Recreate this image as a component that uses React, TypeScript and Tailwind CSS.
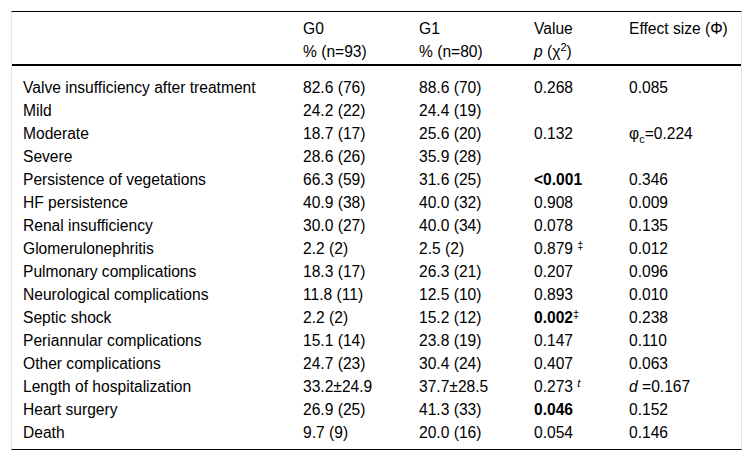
const rows: { label: string; g0: string; g1: string; p: React.ReactNode; eff: React.ReactNode }[] = [
  { label: 'Valve insufficiency after treatment', g0: '82.6 (76)', g1: '88.6 (70)', p: '0.268', eff: '0.085' },
  { label: 'Mild', g0: '24.2 (22)', g1: '24.4 (19)', p: '', eff: '' },
  {
    label: 'Moderate',
    g0: '18.7 (17)',
    g1: '25.6 (20)',
    p: '0.132',
    eff: (
      <>
        φ<sub className="text-[11px] -bottom-[4px]">c</sub>=0.224
      </>
    ),
  },
  { label: 'Severe', g0: '28.6 (26)', g1: '35.9 (28)', p: '', eff: '' },
  { label: 'Persistence of vegetations', g0: '66.3 (59)', g1: '31.6 (25)', p: <b>&lt;0.001</b>, eff: '0.346' },
  { label: 'HF persistence', g0: '40.9 (38)', g1: '40.0 (32)', p: '0.908', eff: '0.009' },
  { label: 'Renal insufficiency', g0: '30.0 (27)', g1: '40.0 (34)', p: '0.078', eff: '0.135' },
  {
    label: 'Glomerulonephritis',
    g0: '2.2 (2)',
    g1: '2.5 (2)',
    p: (
      <>
        0.879 <sup className="text-[11px]">‡</sup>
      </>
    ),
    eff: '0.012',
  },
  { label: 'Pulmonary complications', g0: '18.3 (17)', g1: '26.3 (21)', p: '0.207', eff: '0.096' },
  { label: 'Neurological complications', g0: '11.8 (11)', g1: '12.5 (10)', p: '0.893', eff: '0.010' },
  {
    label: 'Septic shock',
    g0: '2.2 (2)',
    g1: '15.2 (12)',
    p: (
      <>
        <b>0.002</b>
        <sup className="text-[11px]">‡</sup>
      </>
    ),
    eff: '0.238',
  },
  { label: 'Periannular complications', g0: '15.1 (14)', g1: '23.8 (19)', p: '0.147', eff: '0.110' },
  { label: 'Other complications', g0: '24.7 (23)', g1: '30.4 (24)', p: '0.407', eff: '0.063' },
  {
    label: 'Length of hospitalization',
    g0: '33.2±24.9',
    g1: '37.7±28.5',
    p: (
      <>
        0.273 <sup className="text-[11px] italic">t</sup>
      </>
    ),
    eff: (
      <>
        <i>d</i> =0.167
      </>
    ),
  },
  { label: 'Heart surgery', g0: '26.9 (25)', g1: '41.3 (33)', p: <b>0.046</b>, eff: '0.152' },
  { label: 'Death', g0: '9.7 (9)', g1: '20.0 (16)', p: '0.054', eff: '0.146' },
]

const cols = 'grid grid-cols-[280px_116px_115px_95px_125px]'

export default function App() {
  return (
    <div className="min-h-screen bg-white p-[11px] font-['Liberation_Sans',Arial,sans-serif] text-[15.6px] text-black">
      <div className="w-[731px] border-x border-x-[#e6e6e6] border-t border-t-black border-b border-b-black pb-[5px]">
        <div className="pt-[5px] border-b-2 border-b-black">
          <div className={`${cols} h-[23px] items-center`}>
            <div />
            <div className="pl-[11px]">G0</div>
            <div className="pl-[11px]">G1</div>
            <div className="pl-[11px]">Value</div>
            <div className="pl-[11px]">Effect size (Φ)</div>
          </div>
          <div className={`${cols} h-[24px] items-center`}>
            <div />
            <div className="pl-[11px]">% (n=93)</div>
            <div className="pl-[11px]">% (n=80)</div>
            <div className="pl-[11px]">
              <i>p</i> (χ<sup className="text-[11px] -top-[6px]">2</sup>)
            </div>
            <div />
          </div>
        </div>
        <div className="pt-[10px]">
          {rows.map((r) => (
            <div key={r.label} className={`${cols} h-[23px] items-center whitespace-nowrap`}>
              <div className="pl-[11px]">{r.label}</div>
              <div className="pl-[11px]">{r.g0}</div>
              <div className="pl-[11px]">{r.g1}</div>
              <div className="pl-[11px]">{r.p}</div>
              <div className="pl-[11px]">{r.eff}</div>
            </div>
          ))}
        </div>
      </div>
    </div>
  )
}
